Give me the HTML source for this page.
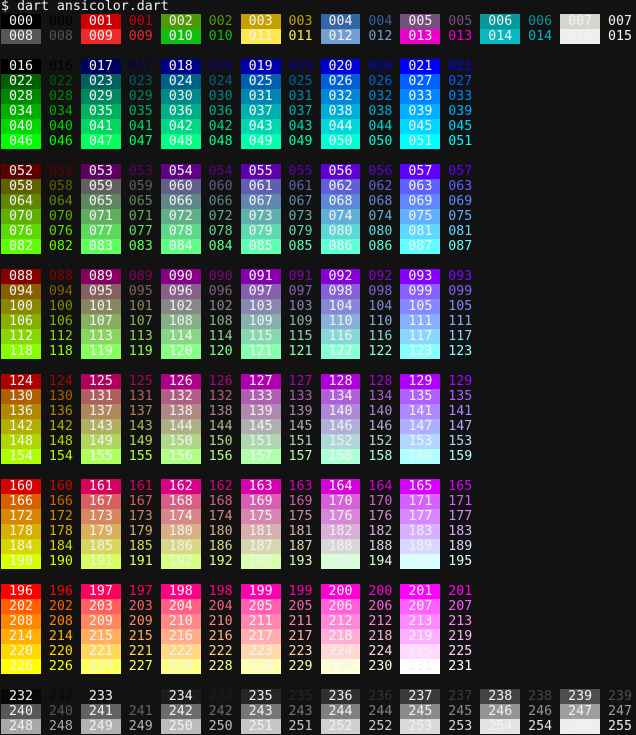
<!DOCTYPE html>
<html><head><meta charset="utf-8">
<style>
html,body{margin:0;padding:0;background:#121212;width:636px;height:735px;overflow:hidden}
pre{margin:-1px 0 0 1px;font-family:"DejaVu Sans Mono","Liberation Mono",monospace;font-size:13.28px;line-height:15px;color:#f0f0f0;white-space:pre}
b,i{font-weight:normal;font-style:normal}
b{color:#f2f2f2}
</style></head><body>
<pre>$ dart ansicolor.dart
<b style="background:#000000"> 000 </b><i style="color:#000000"> 000 </i><b style="background:#cc0000"> 001 </b><i style="color:#cc0000"> 001 </i><b style="background:#4e9a06"> 002 </b><i style="color:#4e9a06"> 002 </i><b style="background:#c4a000"> 003 </b><i style="color:#c4a000"> 003 </i><b style="background:#3465a4"> 004 </b><i style="color:#3465a4"> 004 </i><b style="background:#75507b"> 005 </b><i style="color:#75507b"> 005 </i><b style="background:#06989a"> 006 </b><i style="color:#06989a"> 006 </i><b style="background:#d3d7cf"> 007 </b><i style="color:#f0f0f0"> 007 </i>
<b style="background:#555753"> 008 </b><i style="color:#555753"> 008 </i><b style="background:#ef2929"> 009 </b><i style="color:#ef2929"> 009 </i><b style="background:#10c010"> 010 </b><i style="color:#10c010"> 010 </i><b style="background:#fce94f"> 011 </b><i style="color:#fce94f"> 011 </i><b style="background:#729fcf"> 012 </b><i style="color:#729fcf"> 012 </i><b style="background:#ee00cc"> 013 </b><i style="color:#ee00cc"> 013 </i><b style="background:#06b8c0"> 014 </b><i style="color:#06b8c0"> 014 </i><b style="background:#eeeeec"> 015 </b><i style="color:#f8f8f8"> 015 </i>

<b style="background:#000000"> 016 </b><i style="color:#000000"> 016 </i><b style="background:#00005f"> 017 </b><i style="color:#00005f"> 017 </i><b style="background:#000087"> 018 </b><i style="color:#000087"> 018 </i><b style="background:#0000af"> 019 </b><i style="color:#0000af"> 019 </i><b style="background:#0000d7"> 020 </b><i style="color:#0000d7"> 020 </i><b style="background:#0000ff"> 021 </b><i style="color:#0000ff"> 021 </i>
<b style="background:#005f00"> 022 </b><i style="color:#005f00"> 022 </i><b style="background:#005f5f"> 023 </b><i style="color:#005f5f"> 023 </i><b style="background:#005f87"> 024 </b><i style="color:#005f87"> 024 </i><b style="background:#005faf"> 025 </b><i style="color:#005faf"> 025 </i><b style="background:#005fd7"> 026 </b><i style="color:#005fd7"> 026 </i><b style="background:#005fff"> 027 </b><i style="color:#005fff"> 027 </i>
<b style="background:#008700"> 028 </b><i style="color:#008700"> 028 </i><b style="background:#00875f"> 029 </b><i style="color:#00875f"> 029 </i><b style="background:#008787"> 030 </b><i style="color:#008787"> 030 </i><b style="background:#0087af"> 031 </b><i style="color:#0087af"> 031 </i><b style="background:#0087d7"> 032 </b><i style="color:#0087d7"> 032 </i><b style="background:#0087ff"> 033 </b><i style="color:#0087ff"> 033 </i>
<b style="background:#00af00"> 034 </b><i style="color:#00af00"> 034 </i><b style="background:#00af5f"> 035 </b><i style="color:#00af5f"> 035 </i><b style="background:#00af87"> 036 </b><i style="color:#00af87"> 036 </i><b style="background:#00afaf"> 037 </b><i style="color:#00afaf"> 037 </i><b style="background:#00afd7"> 038 </b><i style="color:#00afd7"> 038 </i><b style="background:#00afff"> 039 </b><i style="color:#00afff"> 039 </i>
<b style="background:#00d700"> 040 </b><i style="color:#00d700"> 040 </i><b style="background:#00d75f"> 041 </b><i style="color:#00d75f"> 041 </i><b style="background:#00d787"> 042 </b><i style="color:#00d787"> 042 </i><b style="background:#00d7af"> 043 </b><i style="color:#00d7af"> 043 </i><b style="background:#00d7d7"> 044 </b><i style="color:#00d7d7"> 044 </i><b style="background:#00d7ff"> 045 </b><i style="color:#00d7ff"> 045 </i>
<b style="background:#00ff00"> 046 </b><i style="color:#00ff00"> 046 </i><b style="background:#00ff5f"> 047 </b><i style="color:#00ff5f"> 047 </i><b style="background:#00ff87"> 048 </b><i style="color:#00ff87"> 048 </i><b style="background:#00ffaf"> 049 </b><i style="color:#00ffaf"> 049 </i><b style="background:#00ffd7"> 050 </b><i style="color:#00ffd7"> 050 </i><b style="background:#00ffff"> 051 </b><i style="color:#00ffff"> 051 </i>

<b style="background:#5f0000"> 052 </b><i style="color:#5f0000"> 052 </i><b style="background:#5f005f"> 053 </b><i style="color:#5f005f"> 053 </i><b style="background:#5f0087"> 054 </b><i style="color:#5f0087"> 054 </i><b style="background:#5f00af"> 055 </b><i style="color:#5f00af"> 055 </i><b style="background:#5f00d7"> 056 </b><i style="color:#5f00d7"> 056 </i><b style="background:#5f00ff"> 057 </b><i style="color:#5f00ff"> 057 </i>
<b style="background:#5f5f00"> 058 </b><i style="color:#5f5f00"> 058 </i><b style="background:#5f5f5f"> 059 </b><i style="color:#5f5f5f"> 059 </i><b style="background:#5f5f87"> 060 </b><i style="color:#5f5f87"> 060 </i><b style="background:#5f5faf"> 061 </b><i style="color:#5f5faf"> 061 </i><b style="background:#5f5fd7"> 062 </b><i style="color:#5f5fd7"> 062 </i><b style="background:#5f5fff"> 063 </b><i style="color:#5f5fff"> 063 </i>
<b style="background:#5f8700"> 064 </b><i style="color:#5f8700"> 064 </i><b style="background:#5f875f"> 065 </b><i style="color:#5f875f"> 065 </i><b style="background:#5f8787"> 066 </b><i style="color:#5f8787"> 066 </i><b style="background:#5f87af"> 067 </b><i style="color:#5f87af"> 067 </i><b style="background:#5f87d7"> 068 </b><i style="color:#5f87d7"> 068 </i><b style="background:#5f87ff"> 069 </b><i style="color:#5f87ff"> 069 </i>
<b style="background:#5faf00"> 070 </b><i style="color:#5faf00"> 070 </i><b style="background:#5faf5f"> 071 </b><i style="color:#5faf5f"> 071 </i><b style="background:#5faf87"> 072 </b><i style="color:#5faf87"> 072 </i><b style="background:#5fafaf"> 073 </b><i style="color:#5fafaf"> 073 </i><b style="background:#5fafd7"> 074 </b><i style="color:#5fafd7"> 074 </i><b style="background:#5fafff"> 075 </b><i style="color:#5fafff"> 075 </i>
<b style="background:#5fd700"> 076 </b><i style="color:#5fd700"> 076 </i><b style="background:#5fd75f"> 077 </b><i style="color:#5fd75f"> 077 </i><b style="background:#5fd787"> 078 </b><i style="color:#5fd787"> 078 </i><b style="background:#5fd7af"> 079 </b><i style="color:#5fd7af"> 079 </i><b style="background:#5fd7d7"> 080 </b><i style="color:#5fd7d7"> 080 </i><b style="background:#5fd7ff"> 081 </b><i style="color:#5fd7ff"> 081 </i>
<b style="background:#5fff00"> 082 </b><i style="color:#5fff00"> 082 </i><b style="background:#5fff5f"> 083 </b><i style="color:#5fff5f"> 083 </i><b style="background:#5fff87"> 084 </b><i style="color:#5fff87"> 084 </i><b style="background:#5fffaf"> 085 </b><i style="color:#5fffaf"> 085 </i><b style="background:#5fffd7"> 086 </b><i style="color:#5fffd7"> 086 </i><b style="background:#5fffff"> 087 </b><i style="color:#5fffff"> 087 </i>

<b style="background:#870000"> 088 </b><i style="color:#870000"> 088 </i><b style="background:#87005f"> 089 </b><i style="color:#87005f"> 089 </i><b style="background:#870087"> 090 </b><i style="color:#870087"> 090 </i><b style="background:#8700af"> 091 </b><i style="color:#8700af"> 091 </i><b style="background:#8700d7"> 092 </b><i style="color:#8700d7"> 092 </i><b style="background:#8700ff"> 093 </b><i style="color:#8700ff"> 093 </i>
<b style="background:#875f00"> 094 </b><i style="color:#875f00"> 094 </i><b style="background:#875f5f"> 095 </b><i style="color:#875f5f"> 095 </i><b style="background:#875f87"> 096 </b><i style="color:#875f87"> 096 </i><b style="background:#875faf"> 097 </b><i style="color:#875faf"> 097 </i><b style="background:#875fd7"> 098 </b><i style="color:#875fd7"> 098 </i><b style="background:#875fff"> 099 </b><i style="color:#875fff"> 099 </i>
<b style="background:#878700"> 100 </b><i style="color:#878700"> 100 </i><b style="background:#87875f"> 101 </b><i style="color:#87875f"> 101 </i><b style="background:#878787"> 102 </b><i style="color:#878787"> 102 </i><b style="background:#8787af"> 103 </b><i style="color:#8787af"> 103 </i><b style="background:#8787d7"> 104 </b><i style="color:#8787d7"> 104 </i><b style="background:#8787ff"> 105 </b><i style="color:#8787ff"> 105 </i>
<b style="background:#87af00"> 106 </b><i style="color:#87af00"> 106 </i><b style="background:#87af5f"> 107 </b><i style="color:#87af5f"> 107 </i><b style="background:#87af87"> 108 </b><i style="color:#87af87"> 108 </i><b style="background:#87afaf"> 109 </b><i style="color:#87afaf"> 109 </i><b style="background:#87afd7"> 110 </b><i style="color:#87afd7"> 110 </i><b style="background:#87afff"> 111 </b><i style="color:#87afff"> 111 </i>
<b style="background:#87d700"> 112 </b><i style="color:#87d700"> 112 </i><b style="background:#87d75f"> 113 </b><i style="color:#87d75f"> 113 </i><b style="background:#87d787"> 114 </b><i style="color:#87d787"> 114 </i><b style="background:#87d7af"> 115 </b><i style="color:#87d7af"> 115 </i><b style="background:#87d7d7"> 116 </b><i style="color:#87d7d7"> 116 </i><b style="background:#87d7ff"> 117 </b><i style="color:#87d7ff"> 117 </i>
<b style="background:#87ff00"> 118 </b><i style="color:#87ff00"> 118 </i><b style="background:#87ff5f"> 119 </b><i style="color:#87ff5f"> 119 </i><b style="background:#87ff87"> 120 </b><i style="color:#87ff87"> 120 </i><b style="background:#87ffaf"> 121 </b><i style="color:#87ffaf"> 121 </i><b style="background:#87ffd7"> 122 </b><i style="color:#87ffd7"> 122 </i><b style="background:#87ffff"> 123 </b><i style="color:#87ffff"> 123 </i>

<b style="background:#af0000"> 124 </b><i style="color:#af0000"> 124 </i><b style="background:#af005f"> 125 </b><i style="color:#af005f"> 125 </i><b style="background:#af0087"> 126 </b><i style="color:#af0087"> 126 </i><b style="background:#af00af"> 127 </b><i style="color:#af00af"> 127 </i><b style="background:#af00d7"> 128 </b><i style="color:#af00d7"> 128 </i><b style="background:#af00ff"> 129 </b><i style="color:#af00ff"> 129 </i>
<b style="background:#af5f00"> 130 </b><i style="color:#af5f00"> 130 </i><b style="background:#af5f5f"> 131 </b><i style="color:#af5f5f"> 131 </i><b style="background:#af5f87"> 132 </b><i style="color:#af5f87"> 132 </i><b style="background:#af5faf"> 133 </b><i style="color:#af5faf"> 133 </i><b style="background:#af5fd7"> 134 </b><i style="color:#af5fd7"> 134 </i><b style="background:#af5fff"> 135 </b><i style="color:#af5fff"> 135 </i>
<b style="background:#af8700"> 136 </b><i style="color:#af8700"> 136 </i><b style="background:#af875f"> 137 </b><i style="color:#af875f"> 137 </i><b style="background:#af8787"> 138 </b><i style="color:#af8787"> 138 </i><b style="background:#af87af"> 139 </b><i style="color:#af87af"> 139 </i><b style="background:#af87d7"> 140 </b><i style="color:#af87d7"> 140 </i><b style="background:#af87ff"> 141 </b><i style="color:#af87ff"> 141 </i>
<b style="background:#afaf00"> 142 </b><i style="color:#afaf00"> 142 </i><b style="background:#afaf5f"> 143 </b><i style="color:#afaf5f"> 143 </i><b style="background:#afaf87"> 144 </b><i style="color:#afaf87"> 144 </i><b style="background:#afafaf"> 145 </b><i style="color:#afafaf"> 145 </i><b style="background:#afafd7"> 146 </b><i style="color:#afafd7"> 146 </i><b style="background:#afafff"> 147 </b><i style="color:#afafff"> 147 </i>
<b style="background:#afd700"> 148 </b><i style="color:#afd700"> 148 </i><b style="background:#afd75f"> 149 </b><i style="color:#afd75f"> 149 </i><b style="background:#afd787"> 150 </b><i style="color:#afd787"> 150 </i><b style="background:#afd7af"> 151 </b><i style="color:#afd7af"> 151 </i><b style="background:#afd7d7"> 152 </b><i style="color:#afd7d7"> 152 </i><b style="background:#afd7ff"> 153 </b><i style="color:#afd7ff"> 153 </i>
<b style="background:#afff00"> 154 </b><i style="color:#afff00"> 154 </i><b style="background:#afff5f"> 155 </b><i style="color:#afff5f"> 155 </i><b style="background:#afff87"> 156 </b><i style="color:#afff87"> 156 </i><b style="background:#afffaf"> 157 </b><i style="color:#afffaf"> 157 </i><b style="background:#afffd7"> 158 </b><i style="color:#afffd7"> 158 </i><b style="background:#afffff"> 159 </b><i style="color:#afffff"> 159 </i>

<b style="background:#d70000"> 160 </b><i style="color:#d70000"> 160 </i><b style="background:#d7005f"> 161 </b><i style="color:#d7005f"> 161 </i><b style="background:#d70087"> 162 </b><i style="color:#d70087"> 162 </i><b style="background:#d700af"> 163 </b><i style="color:#d700af"> 163 </i><b style="background:#d700d7"> 164 </b><i style="color:#d700d7"> 164 </i><b style="background:#d700ff"> 165 </b><i style="color:#d700ff"> 165 </i>
<b style="background:#d75f00"> 166 </b><i style="color:#d75f00"> 166 </i><b style="background:#d75f5f"> 167 </b><i style="color:#d75f5f"> 167 </i><b style="background:#d75f87"> 168 </b><i style="color:#d75f87"> 168 </i><b style="background:#d75faf"> 169 </b><i style="color:#d75faf"> 169 </i><b style="background:#d75fd7"> 170 </b><i style="color:#d75fd7"> 170 </i><b style="background:#d75fff"> 171 </b><i style="color:#d75fff"> 171 </i>
<b style="background:#d78700"> 172 </b><i style="color:#d78700"> 172 </i><b style="background:#d7875f"> 173 </b><i style="color:#d7875f"> 173 </i><b style="background:#d78787"> 174 </b><i style="color:#d78787"> 174 </i><b style="background:#d787af"> 175 </b><i style="color:#d787af"> 175 </i><b style="background:#d787d7"> 176 </b><i style="color:#d787d7"> 176 </i><b style="background:#d787ff"> 177 </b><i style="color:#d787ff"> 177 </i>
<b style="background:#d7af00"> 178 </b><i style="color:#d7af00"> 178 </i><b style="background:#d7af5f"> 179 </b><i style="color:#d7af5f"> 179 </i><b style="background:#d7af87"> 180 </b><i style="color:#d7af87"> 180 </i><b style="background:#d7afaf"> 181 </b><i style="color:#d7afaf"> 181 </i><b style="background:#d7afd7"> 182 </b><i style="color:#d7afd7"> 182 </i><b style="background:#d7afff"> 183 </b><i style="color:#d7afff"> 183 </i>
<b style="background:#d7d700"> 184 </b><i style="color:#d7d700"> 184 </i><b style="background:#d7d75f"> 185 </b><i style="color:#d7d75f"> 185 </i><b style="background:#d7d787"> 186 </b><i style="color:#d7d787"> 186 </i><b style="background:#d7d7af"> 187 </b><i style="color:#d7d7af"> 187 </i><b style="background:#d7d7d7"> 188 </b><i style="color:#d7d7d7"> 188 </i><b style="background:#d7d7ff"> 189 </b><i style="color:#d7d7ff"> 189 </i>
<b style="background:#d7ff00"> 190 </b><i style="color:#d7ff00"> 190 </i><b style="background:#d7ff5f"> 191 </b><i style="color:#d7ff5f"> 191 </i><b style="background:#d7ff87"> 192 </b><i style="color:#d7ff87"> 192 </i><b style="background:#d7ffaf"> 193 </b><i style="color:#d7ffaf"> 193 </i><b style="background:#d7ffd7"> 194 </b><i style="color:#d7ffd7"> 194 </i><b style="background:#d7ffff"> 195 </b><i style="color:#d7ffff"> 195 </i>

<b style="background:#ff0000"> 196 </b><i style="color:#ff0000"> 196 </i><b style="background:#ff005f"> 197 </b><i style="color:#ff005f"> 197 </i><b style="background:#ff0087"> 198 </b><i style="color:#ff0087"> 198 </i><b style="background:#ff00af"> 199 </b><i style="color:#ff00af"> 199 </i><b style="background:#ff00d7"> 200 </b><i style="color:#ff00d7"> 200 </i><b style="background:#ff00ff"> 201 </b><i style="color:#ff00ff"> 201 </i>
<b style="background:#ff5f00"> 202 </b><i style="color:#ff5f00"> 202 </i><b style="background:#ff5f5f"> 203 </b><i style="color:#ff5f5f"> 203 </i><b style="background:#ff5f87"> 204 </b><i style="color:#ff5f87"> 204 </i><b style="background:#ff5faf"> 205 </b><i style="color:#ff5faf"> 205 </i><b style="background:#ff5fd7"> 206 </b><i style="color:#ff5fd7"> 206 </i><b style="background:#ff5fff"> 207 </b><i style="color:#ff5fff"> 207 </i>
<b style="background:#ff8700"> 208 </b><i style="color:#ff8700"> 208 </i><b style="background:#ff875f"> 209 </b><i style="color:#ff875f"> 209 </i><b style="background:#ff8787"> 210 </b><i style="color:#ff8787"> 210 </i><b style="background:#ff87af"> 211 </b><i style="color:#ff87af"> 211 </i><b style="background:#ff87d7"> 212 </b><i style="color:#ff87d7"> 212 </i><b style="background:#ff87ff"> 213 </b><i style="color:#ff87ff"> 213 </i>
<b style="background:#ffaf00"> 214 </b><i style="color:#ffaf00"> 214 </i><b style="background:#ffaf5f"> 215 </b><i style="color:#ffaf5f"> 215 </i><b style="background:#ffaf87"> 216 </b><i style="color:#ffaf87"> 216 </i><b style="background:#ffafaf"> 217 </b><i style="color:#ffafaf"> 217 </i><b style="background:#ffafd7"> 218 </b><i style="color:#ffafd7"> 218 </i><b style="background:#ffafff"> 219 </b><i style="color:#ffafff"> 219 </i>
<b style="background:#ffd700"> 220 </b><i style="color:#ffd700"> 220 </i><b style="background:#ffd75f"> 221 </b><i style="color:#ffd75f"> 221 </i><b style="background:#ffd787"> 222 </b><i style="color:#ffd787"> 222 </i><b style="background:#ffd7af"> 223 </b><i style="color:#ffd7af"> 223 </i><b style="background:#ffd7d7"> 224 </b><i style="color:#ffd7d7"> 224 </i><b style="background:#ffd7ff"> 225 </b><i style="color:#ffd7ff"> 225 </i>
<b style="background:#ffff00"> 226 </b><i style="color:#ffff00"> 226 </i><b style="background:#ffff5f"> 227 </b><i style="color:#ffff5f"> 227 </i><b style="background:#ffff87"> 228 </b><i style="color:#ffff87"> 228 </i><b style="background:#ffffaf"> 229 </b><i style="color:#ffffaf"> 229 </i><b style="background:#ffffd7"> 230 </b><i style="color:#ffffd7"> 230 </i><b style="background:#ffffff"> 231 </b><i style="color:#ffffff"> 231 </i>

<b style="background:#080808"> 232 </b><i style="color:#080808"> 232 </i><b style="background:#121212"> 233 </b><i style="color:#121212"> 233 </i><b style="background:#1c1c1c"> 234 </b><i style="color:#1c1c1c"> 234 </i><b style="background:#262626"> 235 </b><i style="color:#262626"> 235 </i><b style="background:#303030"> 236 </b><i style="color:#303030"> 236 </i><b style="background:#3a3a3a"> 237 </b><i style="color:#3a3a3a"> 237 </i><b style="background:#444444"> 238 </b><i style="color:#444444"> 238 </i><b style="background:#4e4e4e"> 239 </b><i style="color:#4e4e4e"> 239 </i>
<b style="background:#585858"> 240 </b><i style="color:#585858"> 240 </i><b style="background:#626262"> 241 </b><i style="color:#626262"> 241 </i><b style="background:#6c6c6c"> 242 </b><i style="color:#6c6c6c"> 242 </i><b style="background:#767676"> 243 </b><i style="color:#767676"> 243 </i><b style="background:#808080"> 244 </b><i style="color:#808080"> 244 </i><b style="background:#8a8a8a"> 245 </b><i style="color:#8a8a8a"> 245 </i><b style="background:#949494"> 246 </b><i style="color:#949494"> 246 </i><b style="background:#9e9e9e"> 247 </b><i style="color:#9e9e9e"> 247 </i>
<b style="background:#a8a8a8"> 248 </b><i style="color:#a8a8a8"> 248 </i><b style="background:#b2b2b2"> 249 </b><i style="color:#b2b2b2"> 249 </i><b style="background:#bcbcbc"> 250 </b><i style="color:#bcbcbc"> 250 </i><b style="background:#c6c6c6"> 251 </b><i style="color:#c6c6c6"> 251 </i><b style="background:#d0d0d0"> 252 </b><i style="color:#d0d0d0"> 252 </i><b style="background:#dadada"> 253 </b><i style="color:#dadada"> 253 </i><b style="background:#e4e4e4"> 254 </b><i style="color:#e4e4e4"> 254 </i><b style="background:#eeeeee"> 255 </b><i style="color:#eeeeee"> 255 </i></pre>
</body></html>
